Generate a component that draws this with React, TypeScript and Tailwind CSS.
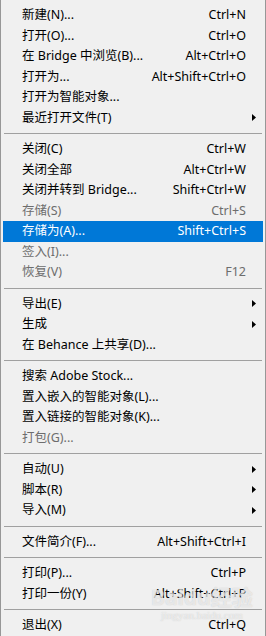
type Item =
  | { sep: true }
  | { sep?: false; label: string; shortcut?: string; disabled?: boolean; active?: boolean; sub?: boolean };

const items: Item[] = [
  { label: "新建(N)...", shortcut: "Ctrl+N" },
  { label: "打开(O)...", shortcut: "Ctrl+O" },
  { label: "在 Bridge 中浏览(B)...", shortcut: "Alt+Ctrl+O" },
  { label: "打开为...", shortcut: "Alt+Shift+Ctrl+O" },
  { label: "打开为智能对象..." },
  { label: "最近打开文件(T)", sub: true },
  { sep: true },
  { label: "关闭(C)", shortcut: "Ctrl+W" },
  { label: "关闭全部", shortcut: "Alt+Ctrl+W" },
  { label: "关闭并转到 Bridge...", shortcut: "Shift+Ctrl+W" },
  { label: "存储(S)", shortcut: "Ctrl+S", disabled: true },
  { label: "存储为(A)...", shortcut: "Shift+Ctrl+S", active: true },
  { label: "签入(I)...", disabled: true },
  { label: "恢复(V)", shortcut: "F12", disabled: true },
  { sep: true },
  { label: "导出(E)", sub: true },
  { label: "生成", sub: true },
  { label: "在 Behance 上共享(D)..." },
  { sep: true },
  { label: "搜索 Adobe Stock..." },
  { label: "置入嵌入的智能对象(L)..." },
  { label: "置入链接的智能对象(K)..." },
  { label: "打包(G)...", disabled: true },
  { sep: true },
  { label: "自动(U)", sub: true },
  { label: "脚本(R)", sub: true },
  { label: "导入(M)", sub: true },
  { sep: true },
  { label: "文件简介(F)...", shortcut: "Alt+Shift+Ctrl+I" },
  { sep: true },
  { label: "打印(P)...", shortcut: "Ctrl+P" },
  { label: "打印一份(Y)", shortcut: "Alt+Shift+Ctrl+P" },
  { sep: true },
  { label: "退出(X)", shortcut: "Ctrl+Q" },
];

const Arrow = () => (
  <svg width="4" height="7" viewBox="0 0 4 7" className="block">
    <path d="M0 0 L4 3.5 L0 7 Z" fill="#000" />
  </svg>
);

export default function App() {
  return (
    <div
      className="relative w-[266px] h-[636px] overflow-hidden bg-[#f0f0f0] border-x border-[#979797] pt-[5px] text-[12.5px] leading-none"
      style={{ fontFamily: '"Noto Sans", "Noto Sans CJK SC", sans-serif' }}
    >
      {items.map((it, i) =>
        it.sep ? (
          <div key={i} className="flex h-[11px] items-center px-[3px]">
            <div className="h-px w-full bg-[#a0a0a0]" />
          </div>
        ) : (
          <div
            key={i}
            className={
              "mx-[2px] flex h-[20.5px] items-center pl-[19px] " +
              (it.active ? "bg-[#0078d7] text-white" : it.disabled ? "text-[#6d6d6d]" : "text-black")
            }
          >
            <span className="flex-1 whitespace-nowrap">{it.label}</span>
            {it.shortcut && <span className="whitespace-nowrap">{it.shortcut}</span>}
            <div className="flex w-[17px] justify-end pr-[7px]">{it.sub && <Arrow />}</div>
          </div>
        )
      )}
      <div className="pointer-events-none absolute left-[150px] top-[587px] flex flex-col items-center text-white/60 [text-shadow:0_0_1px_rgba(150,150,150,0.5)]">
        <span className="text-[21px] font-bold leading-none">Baidu经验</span>
        <span className="mt-[2px] text-[11px] leading-none" style={{ fontFamily: '"Liberation Serif", serif' }}>
          jingyan.baidu.com
        </span>
      </div>
    </div>
  );
}
